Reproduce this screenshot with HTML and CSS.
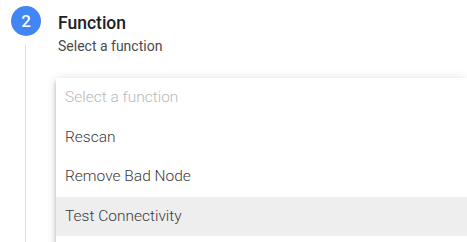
FILE: index.html
```html
<!DOCTYPE html>
<html>
<head>
<meta charset="utf-8">
<link rel="stylesheet" href="styles.css">
</head>
<body>
<div class="step">
  <div class="rail">
    <div class="badge">2</div>
    <div class="line"></div>
  </div>
  <div class="content">
    <div class="title">Function</div>
    <div class="subtitle">Select a function</div>
    <div class="panel">
      <div class="option placeholder">Select a function</div>
      <div class="option">Rescan</div>
      <div class="option">Remove Bad Node</div>
      <div class="option active">Test Connectivity</div>
      <div class="option"></div>
    </div>
  </div>
</div>
</body>
</html>
```

FILE: styles.css
```css
html, body {
  margin: 0;
  padding: 0;
  background: #ffffff;
  overflow: hidden;
  height: 242px;
}
body {
  font-family: Roboto, "Liberation Sans", sans-serif;
}
.step {
  display: flex;
  flex-direction: row;
  height: 242px;
}
.rail {
  width: 56px;
  padding-top: 6px;
  display: flex;
  flex-direction: column;
  align-items: flex-start;
}
.badge {
  margin-left: 11px;
  width: 30px;
  height: 30px;
  border-radius: 50%;
  background: #4285f4;
  color: #ffffff;
  font-size: 17px;
  font-weight: 500;
  display: flex;
  align-items: center;
  justify-content: center;
}
.line {
  margin-left: 25px;
  margin-top: 9px;
  width: 1px;
  flex: 1;
  background: #dedede;
}
.content {
  flex: 1;
  display: flex;
  flex-direction: column;
}
.title {
  padding-left: 2px;
  margin-top: 12px;
  font-size: 17.5px;
  font-weight: 500;
  line-height: 22px;
  color: #202124;
}
.subtitle {
  padding-left: 2px;
  margin-top: 3px;
  font-size: 14px;
  line-height: 18px;
  color: #4a4a4a;
}
.panel {
  margin-top: 23px;
  background: #ffffff;
  box-shadow: 0 2px 4px -1px rgba(0,0,0,.2), 0 4px 5px 0 rgba(0,0,0,.14), 0 1px 10px 0 rgba(0,0,0,.12);
}
.option {
  height: 39.5px;
  line-height: 39.5px;
  padding-left: 9px;
  font-size: 15.5px;
  font-weight: 300;
  color: #3a3a3a;
  white-space: nowrap;
}
.option.placeholder {
  color: #b8b8b8;
}
.option.active {
  background: #eeeeee;
}
```
